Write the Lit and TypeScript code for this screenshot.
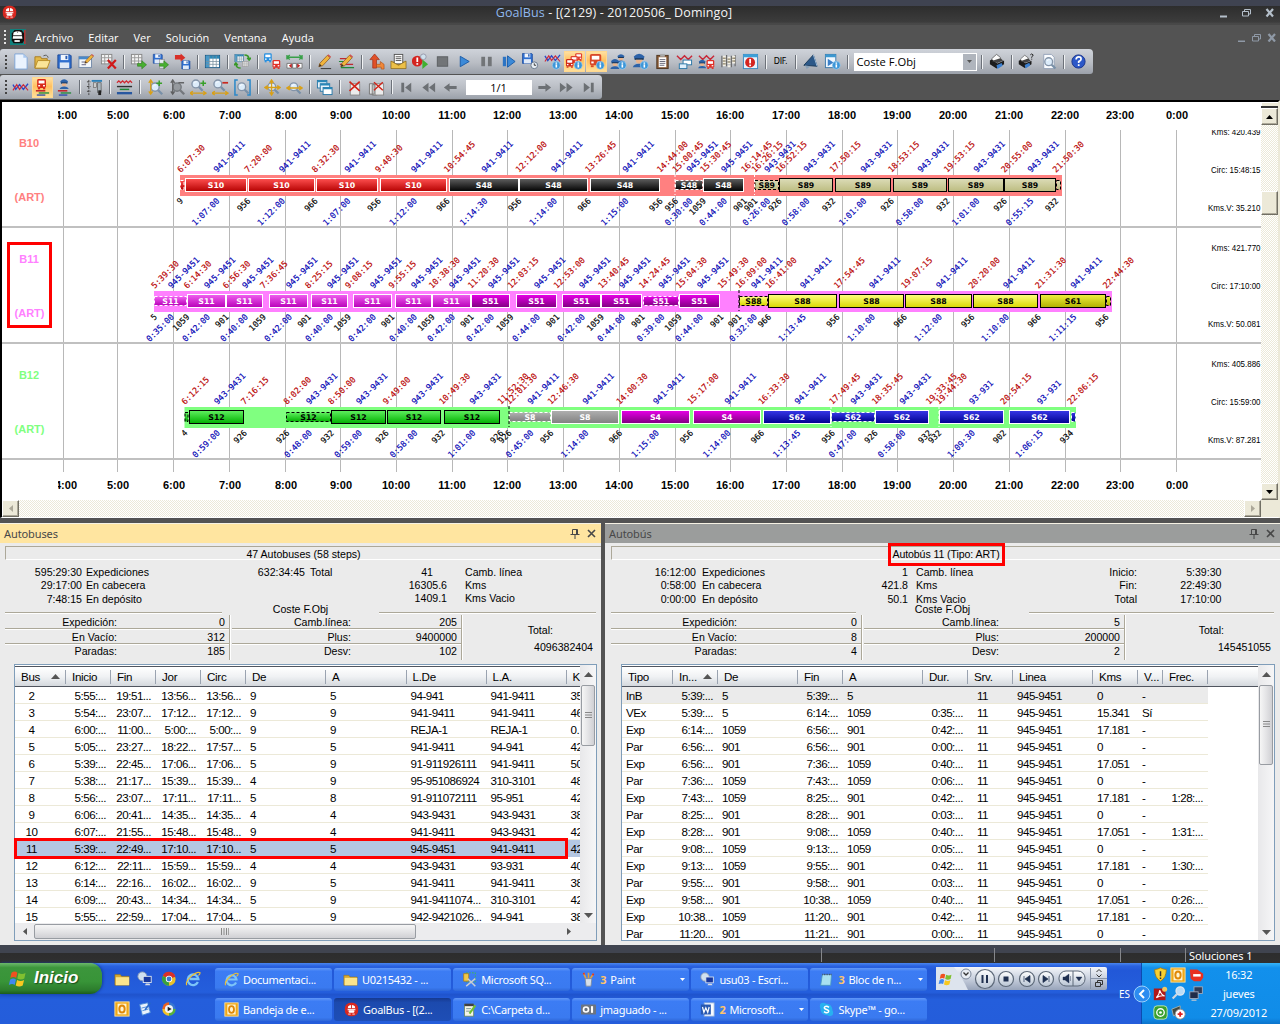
import { LitElement, html, svg, css, nothing } from "lit";
import { customElement, property } from "lit/decorators.js";
import { classMap } from "lit/directives/class-map.js";
import { styleMap } from "lit/directives/style-map.js";

/* ---------- icon building blocks (18 x 18 grid) ---------- */
const at = (x: number, y: number, s: number, g: unknown) => svg`<g transform="translate(${x} ${y}) scale(${s})">${g}</g>`;
const busShape = (c: string) => svg`<rect x="3" y="2" width="12" height="12" rx="2" fill=${c}/><rect x="5" y="4" width="8" height="4" fill="#fff"/><rect x="4.5" y="10" width="2.5" height="2" fill="#fff"/><rect x="11" y="10" width="2.5" height="2" fill="#fff"/><rect x="4" y="14" width="3" height="2" fill=${c}/><rect x="11" y="14" width="3" height="2" fill=${c}/>`;
const floppy = svg`<path d="M2 2h13l1 1v13H2z" fill="#2f6fd0" stroke="#1a4796"/><rect x="5" y="2" width="8" height="5.5" fill="#f2f6fc"/><rect x="10" y="3" width="2" height="3.5" fill="#2a5cb0"/><rect x="4" y="10" width="10" height="6" fill="#dfe9f7"/>`;
const pencil = svg`<path d="M3 14.5L4 11L12 2.5L15 5L7 13.5z" fill="#f0b43c" stroke="#8a5a28" stroke-width=".8"/><path d="M3 14.5L4 11.5L6 13.5z" fill="#403020"/><path d="M12 2.5L15 5L16 4L13 1.4z" fill="#d05050"/>`;
const info = svg`<circle cx="13" cy="13" r="4.2" fill="#3c96d8" stroke="#a8d4f4" stroke-width=".6"/><rect x="12.2" y="12" width="1.7" height="3.4" fill="#fff"/><rect x="12.2" y="10" width="1.7" height="1.4" fill="#fff"/>`;
const cop = svg`<path d="M3 5Q9-1 15 5L14 8H4z" fill="#2c62a8"/><rect x="4" y="7" width="10" height="1.6" fill="#16304e"/><path d="M5.5 8.6h7v2.5q-3.5 4-7 0z" fill="#eab48c"/><path d="M2 17q1-4 7-4t7 4z" fill="#2c62a8"/>`;
const lens = svg`<circle cx="8" cy="8" r="4.6" fill="#dcecfa" stroke="#8494a8" stroke-width="1.6"/><path d="M11.5 11.5L16 16" stroke="#7890a8" stroke-width="2.6"/><path d="M6 7Q7 5.4 9 5.5" stroke="#fff" fill="none"/>`;
const sheet = svg`<path d="M4 1.500h8l3 3v12H4z" fill="#fafcff" stroke="#8898b0" stroke-width=".8"/>`;
const grid = svg`<rect x="1.500" y="2.500" width="15" height="13" fill="#fff" stroke="#1c5c88"/><rect x="2" y="3" width="14" height="3" fill="#2888b8"/><rect x="2" y="3" width="3.500" height="12" fill="#4898c8"/><path d="M2 9h14M2 12h14M6 3v12M9.500 3v12M13 3v12" stroke="#7890a0" stroke-width=".8"/>`;
const grayGrid = svg`<rect x="1.500" y="1.500" width="11" height="10" fill="#f4f4f4" stroke="#888"/><path d="M1 5h12M1 8.500h12M5 1v11M9 1v11" stroke="#999"/>`;
const greenArrow = svg`<path d="M8 11h4.500V8.200L17.500 12.500L12.500 16.800V14H8z" fill="#48b030" stroke="#2a7818" stroke-width=".6"/>`;
const waves = svg`<path d="M1 6L4 11L8 6L12 11L17 5" fill="none" stroke="#2848c8" stroke-width="1.400"/><path d="M1 12L5 6L8 11L12 6L17 12" fill="none" stroke="#d02838" stroke-width="1.200"/>`;
const redZig = svg`<path d="M1 3L5 7L9 3L13 7L17 3" fill="none" stroke="#c82838" stroke-width="1.500"/>`;
const bangCircle = (r: number) => svg`<circle cx="8" cy="9" r=${r} fill="#d42420"/><rect x="7" y="5" width="2" height="5" fill="#fff"/><rect x="7" y="11.300" width="2" height="1.800" fill="#fff"/>`;
const printer = svg`<path d="M4 6L9 1.500L13 4.500L14 8L5 9z" fill="#fafafa" stroke="#444" stroke-width=".7"/><path d="M2 8L4 7L10 11L17 8V12L9 16.500L2 12z" fill="#1c1c1c"/><path d="M4 8.500L13 5.500L16 8L10 10.500z" fill="#444"/><path d="M9 13L14.500 10.500L15.500 13.500L10 17z" fill="#3c80d0"/>`;
const redX = svg`<path d="M3 3L15 14M15 3L3 14" stroke="#d02418" stroke-width="1.900"/>`;
const bars = svg`<path d="M2 12.500h10" stroke="#c02028" stroke-width="1.600"/><path d="M5 14.800h11" stroke="#208838" stroke-width="1.400"/><path d="M3 17h9" stroke="#2848b0" stroke-width="1.400"/>`;
const yArrowH = svg`<path d="M0 15h17M3 13L0 15L3 17M14 13L17 15L14 17" stroke="#d8a018" stroke-width="1.400" fill="none"/>`;

const ICONS: Record<string, unknown> = {
  new: svg`<path d="M3 1h9l4 4v12H3z" fill="#eaf3fe" stroke="#7ea6d8"/><path d="M12 1v4h4z" fill="#a8c8f0"/>`,
  open: svg`<path d="M1 4h6l1 2h6v10H1z" fill="#e2b848" stroke="#a87c20"/><path d="M1 16L4 8h13l-3 8z" fill="#fae498" stroke="#b88c28"/><path d="M10 3q4-2 5 2" stroke="#555" fill="none"/>`,
  save: floppy,
  edit: svg`${at(0, 1, 0.95, svg`<rect x="1" y="3" width="14" height="12" fill="#f4f8fc" stroke="#7088a8"/><rect x="1" y="3" width="14" height="3" fill="#4888c8"/><path d="M4 9h6M4 12h5" stroke="#557"/>`)}${at(5, 0, 0.75, pencil)}`,
  del: svg`${grayGrid}${at(7, 6, 0.65, svg`<path d="M2 2L15 16M15 2L2 16" stroke="#d01818" stroke-width="3.600"/>`)}`,
  gridOut: svg`${grayGrid}${greenArrow}`,
  saveOut: svg`${at(0, 0, 0.68, floppy)}<rect x="8" y="7" width="5" height="9" fill="#e8eef4" stroke="#888" stroke-width=".6"/>${greenArrow}`,
  saveIn: svg`${at(7, 7, 0.62, floppy)}<path d="M1 2h6v-1.500L12 5L7 9V7H1z" fill="#d83028"/>`,
  table: grid,
  swap: svg`${at(0, 0, 0.6, grid)}${at(8, 8, 0.55, grayGrid)}<path d="M11 2q5 0 5 5M14 5l2 2.500L18 5M7 16q-5 0-5-5M0 13l2-2.500L4 13" fill="none" stroke="#389828" stroke-width="1.600"/>`,
  buses: svg`${at(-2, -1, 0.68, busShape("#2890e0"))}${at(7, 6, 0.68, busShape("#e03028"))}`,
  fit: svg`<path d="M1 2v5M17 2v5M1 4.500h16M4 2L1 4.500L4 7M14 2L17 4.500L14 7" stroke="#38a048" fill="none" stroke-width="1.400"/><path d="M1 11v5h5v-5zM7 11v5h4v-5zM12 11v5h5v-5z" fill="#fff" stroke="#777"/><path d="M6 11L3 13.500L6 16M12 11l3 2.500L12 16" fill="#c82020"/>`,
  pencil: svg`${pencil}<path d="M5 16.500h11" stroke="#333"/>`,
  pencilLines: svg`<path d="M2 6h10M2 12h14" stroke="#c02830" stroke-width="1.300"/><path d="M1 9h8M3 15.500h14" stroke="#208838" stroke-width="1.300"/>${pencil}`,
  up: svg`<path d="M7 1L12 7H9v9H5V7H2z" fill="#e05028" stroke="#a02810" stroke-width=".7"/><path d="M9 12h4V9l4 3v5h-3v-2H9z" fill="#f08838" stroke="#a84810" stroke-width=".6"/>`,
  envelope: svg`<path d="M1 9h16v7.500H1z" fill="#c89828"/><rect x="4.500" y="1.500" width="9" height="10" fill="#fff" stroke="#555"/><path d="M6 4h6M6 6h6M6 8h6" stroke="#555"/><path d="M1 8.500L9 13L17 8.500V16.500H1z" fill="#ecc048" stroke="#80601c" stroke-width=".7"/>`,
  bangPlay: svg`${at(-2, 0, 0.95, bangCircle(6))}<circle cx="12" cy="4" r="3" fill="#cfe2ee" stroke="#99a"/><path d="M11 7L17 12L11 17z" fill="#40b030"/>`,
  stop: svg`<rect x="3.500" y="4" width="11" height="10" fill="#727578" stroke="#5c5f62"/>`,
  play: svg`<path d="M4.500 3.500L14 9L4.500 14.500z" fill="#3c8ad8" stroke="#1c5ca8"/>`,
  pause: svg`<rect x="3.500" y="4" width="4" height="10" fill="#727578"/><rect x="10.500" y="4" width="4" height="10" fill="#727578"/>`,
  step: svg`<rect x="3" y="4" width="3.500" height="10" fill="#2c74c4"/><path d="M8 3L16 9L8 15z" fill="#3c8ad8" stroke="#1c5ca8"/>`,
  saveClock: svg`${at(-1, -1, 0.75, floppy)}<circle cx="13" cy="13" r="3.600" fill="#e8eef4" stroke="#68788c"/><path d="M13 11v2h2" stroke="#333" fill="none"/>`,
  wavesInfo: svg`${at(0, -3, 1, waves)}${info}`,
  busesInfo: svg`${at(8, -1, 0.6, busShape("#e04030"))}${at(3, 2, 0.62, busShape("#e04030"))}${at(-2, 5, 0.66, busShape("#d02818"))}${info}`,
  busInfo: svg`${at(-1, -1, 1, busShape("#d84828"))}${info}`,
  copsInfo: svg`${at(6, 0, 0.62, cop)}${at(-1, 5, 0.7, cop)}${info}`,
  copInfo: svg`${at(-1, -1, 0.95, cop)}${info}`,
  clipboard: svg`<rect x="3" y="2.500" width="12" height="14" fill="#8a5c38" stroke="#4c3420"/><rect x="5" y="4.500" width="8" height="10.500" fill="#fff"/><rect x="6.500" y="1" width="5" height="3" fill="#aaa"/><path d="M6 7h6M6 9h6M6 11h6M6 13h5" stroke="#556" stroke-width=".9"/>`,
  zigWin: svg`${redZig}<rect x="7.500" y="7.500" width="9" height="5" fill="#fff" stroke="#2c78a8"/><rect x="3.500" y="11.500" width="8" height="5" fill="#dff0fc" stroke="#2c78a8"/>`,
  zigBus: svg`${redZig}${at(7, 6, 0.68, busShape("#e03028"))}${at(-1, 6, 0.6, cop)}`,
  columns: svg`<path d="M2 3v12M7 2v12M12 3v12M16 2v12" stroke="#666" stroke-width="1.200"/><path d="M3 4h3M3 7h3M3 10h3M3 13h3M8 5h3M8 8h3M8 11h3M8 14h3M13 4h3M13 7h3M13 10h3" stroke="#f4f0e4" stroke-width="2"/><path d="M3 5.500h3M3 8.500h3M3 11.500h3M8 6.500h3M8 9.500h3M13 5.500h3M13 8.500h3" stroke="#887850"/>`,
  bangWin: svg`<rect x="1.500" y="1.500" width="15" height="15" fill="#e8f2fc" stroke="#3c88c0"/><rect x="1.500" y="1.500" width="15" height="3" fill="#3ca0d8"/>${at(1, 1.5, 0.95, bangCircle(5.5))}`,
  horn: svg`<path d="M2 13L12 2L16 14z" fill="#2c5888" stroke="#1a3858"/><path d="M3 13l6 1-4 3z" fill="#88a0b8"/><path d="M12 2l4 12" stroke="#a0c0e0"/>`,
  winPlay: svg`<rect x="1.500" y="1.500" width="11" height="14" fill="#f0f8ff" stroke="#3c78a8"/><rect x="1.500" y="1.500" width="11" height="3" fill="#3c98d0"/><path d="M4 6L10 10L4 14z" fill="#3c80c8"/>${info}`,
  print: printer,
  printQ: svg`${at(-1, 1, 0.9, printer)}<path d="M13 2q1.500-2 3 0q0 1.500-1.500 2v1M14.500 6v1" stroke="#222" fill="none"/>`,
  preview: svg`${sheet}${at(2, 2, 0.9, lens)}`,
  help: svg`<circle cx="9" cy="9" r="7" fill="#2c58c8" stroke="#1a348c"/><path d="M6.500 7q0-3 2.700-3t2.500 2.500q0 1.300-2.500 2.600v1.400M9.200 12v1.800" stroke="#fff" stroke-width="1.800" fill="none"/>`,
  waves,
  busBars: svg`${at(1, -1.5, 0.78, busShape("#d82818"))}${bars}`,
  copBars: svg`${at(2.5, -1, 0.68, cop)}${bars}`,
  chart: svg`<path d="M3 1v16M1 3h4M1 8h4M1 13h4" stroke="#444" stroke-dasharray="2.500 1"/><path d="M6 2h11" stroke="#2c80b8" stroke-width="2"/><rect x="12" y="4" width="4" height="10" fill="#a8b4bc" stroke="#444" stroke-width=".6"/><rect x="13" y="12" width="3" height="5" fill="#222"/><rect x="8" y="4" width="3" height="5" fill="#ccc" stroke="#555" stroke-width=".6"/>`,
  wavesLines: svg`<path d="M1 4L3 2L5 4L7 2L9 4L11 2L13 4L15 2L17 4" stroke="#d02830" stroke-width="1.300" fill="none"/><path d="M1 8h16" stroke="#303030" stroke-width="1.500"/><path d="M4 11h10" stroke="#208838" stroke-width="1.600"/><path d="M1 15h16" stroke="#2858a0" stroke-width="2.500"/>`,
  zoomVIn: svg`${at(2, 1, 0.95, lens)}<path d="M5 1v15M3 4l2-3l2 3M3 13l2 3l2-3" stroke="#d8a018" stroke-width="1.400" fill="none"/><path d="M11 4.500h6M14 1.500v6" stroke="#38a028" stroke-width="1.600"/>`,
  zoomVOut: svg`<g opacity=".75">${at(2, 1, 0.95, svg`<circle cx="8" cy="8" r="4.600" fill="#8a8e92" stroke="#606468" stroke-width="1.600"/><path d="M11.500 11.500L16 16" stroke="#606468" stroke-width="2.600"/>`)}<path d="M5 1v15M3 4l2-3l2 3M3 13l2 3l2-3M11 4h6" stroke="#444" stroke-width="1.400" fill="none"/></g>`,
  zoomHIn: svg`${at(-1, -2, 0.9, lens)}${yArrowH}<path d="M11 4.500h6M14 1.500v6" stroke="#38a028" stroke-width="1.600"/>`,
  zoomHOut: svg`${at(-1, -2, 0.9, lens)}${yArrowH}<path d="M11 4h6" stroke="#c82820" stroke-width="1.800"/>`,
  zoomFit: svg`${at(1, 1, 0.9, lens)}<path d="M4 1H1V17H4M14 1H17V17H14" stroke="#2c88c8" fill="none" stroke-width="1.600"/>`,
  zoomCross: svg`${at(1, 1, 0.9, lens)}<path d="M8 1v16M1 9h16M6 4l2-3l2 3M6 14l2 3l2-3M14 7l3 2l-3 2M4 7L1 9l3 2" stroke="#d8a018" stroke-width="1.400" fill="none"/>`,
  zoomH: svg`${at(1, 1, 0.9, lens)}<path d="M1 9.500h16M14 7.500l3 2l-3 2M4 7.500L1 9.500l3 2" stroke="#d8a018" stroke-width="1.500" fill="none"/>`,
  cascade: svg`<rect x="1.500" y="1.500" width="10" height="8" fill="#e8f4fc" stroke="#2878a8"/><rect x="4.500" y="5" width="10" height="8" fill="#e8f4fc" stroke="#2878a8"/><rect x="7.500" y="9" width="9.500" height="7.500" fill="#fff" stroke="#2878a8"/><path d="M1.500 2.500h10M4.500 6h10M7.500 10h9.500" stroke="#2888b8" stroke-width="1.800"/>`,
  closeOne: svg`<rect x="4.500" y="5" width="10" height="12" fill="#ececec" stroke="#888"/>${at(1, 0, 0.9, redX)}`,
  closeAll: svg`<path d="M1.500 5h5v11h-5zM4.500 6h5v11h-5z" fill="#e4e4e4" stroke="#777"/><rect x="7.500" y="5" width="9" height="12" fill="#ececec" stroke="#888"/>${at(4, 1, 0.78, redX)}`,
  first: svg`<path d="M3.500 4h3v10h-3zM14 4v10L7.500 9z" fill="#6c7074"/>`,
  rew: svg`<path d="M9 4v10L2.500 9zM16 4v10L9.500 9z" fill="#6c7074"/>`,
  left: svg`<path d="M2 9L8 4.500V7.500h7.500v3H8v3z" fill="#6c7074"/>`,
  right: svg`<path d="M16 9L10 4.500V7.500H2.500v3H10v3z" fill="#6c7074"/>`,
  ffw: svg`<path d="M9 4v10l6.500-5zM2 4v10l6.500-5z" fill="#6c7074"/>`,
  last: svg`<path d="M11.500 4h3v10h-3zM4 4v10l6.500-5z" fill="#6c7074"/>`,
  appBus: svg`<rect x="1" y="1" width="16" height="16" rx="6.500" fill="#d82820"/><path d="M5 5q4-3 8 0l.8 5H4.200z" fill="#fff"/><path d="M4 8h10M9 3.500v4.500" stroke="#d82820" stroke-width="1.100"/><rect x="5.500" y="9.800" width="7" height="3" rx="1" fill="#fff"/><path d="M5 14.500h3M10 14.500h3" stroke="#fff"/>`,
  docBus: svg`<rect width="18" height="18" fill="#10807c"/><path d="M5 1h8l3 4v8l-2 3H4l-2-3V5z" fill="#101010"/><path d="M4 4q5-3 9 0l1 7H3z" fill="#fff"/><path d="M3 7.500h11M8.500 3v1" stroke="#222"/><rect x="5" y="12.500" width="6" height="2" fill="#fff"/><rect x="16" y="1" width="1.500" height="16" fill="#e02020"/>`,
  folder: svg`<path d="M1 4h6l1.500 2H17v10H1z" fill="#d8a830" stroke="#8c6c18" stroke-width=".6"/><path d="M2 7h15v9H2z" fill="#fbe48c"/>`,
  remote: svg`<circle cx="6" cy="6" r="5" fill="#d0e0f0" stroke="#8898b0"/><rect x="7" y="6" width="9" height="7" fill="#1838a0" stroke="#e0e8f0"/><path d="M9 16h6l-1-2h-4z" fill="#d8dce4"/>`,
  chrome: svg`<circle cx="9" cy="9" r="7.500" fill="#e8c028"/><path d="M9 9L2 5.500A7.500 7.500 0 0 1 16.200 6.500z" fill="#d83028"/><path d="M9 9L2 5.500A7.500 7.500 0 0 0 9 16.500z" fill="#38a040"/><circle cx="9" cy="9" r="3.600" fill="#fff"/><circle cx="9" cy="9" r="2.700" fill="#3878d0"/>`,
  ie: svg`<path d="M14.500 12.500A6 6 0 1 1 15 9H5" fill="none" stroke="#7cc4f8" stroke-width="2.600"/><path d="M2 16Q0 12 7 6T17 2Q17 4 15 5" fill="none" stroke="#f0c030" stroke-width="1.300"/>`,
  outlook: svg`<rect x="1" y="1" width="16" height="16" fill="#f0a818" stroke="#fbe0a0"/><rect x="4" y="3" width="10" height="12" fill="#fff4d0"/><ellipse cx="9" cy="9" rx="3" ry="4" fill="none" stroke="#e08808" stroke-width="2.200"/>`,
  desktop: svg`<path d="M3 4l9-2 3 11-9 3z" fill="#e8f2fc" stroke="#4888d8"/><path d="M5 8l8-2M6 11l7-2" stroke="#4888d8"/><path d="M9 10l6-8" stroke="#2868c8" stroke-width="1.800"/>`,
  media: svg`<circle cx="9" cy="9" r="7.500" fill="#3878d0"/><path d="M9 9V1.500A7.500 7.500 0 0 0 1.500 9z" fill="#e86020"/><path d="M9 9h7.500A7.500 7.500 0 0 1 9 16.500z" fill="#58b038"/><path d="M9 9H1.500A7.500 7.500 0 0 0 9 16.500z" fill="#f0c028"/><circle cx="9" cy="9" r="4.600" fill="#f0f4f8"/><path d="M7.500 6.500L12 9L7.500 11.500z" fill="#202020"/>`,
  sql: svg`<rect x="5" y="1" width="11" height="11" fill="none" stroke="#40c040" stroke-dasharray="2 1.500"/><path d="M2 2h6v9H2z" fill="#f0c848" stroke="#a88020"/><path d="M5 17L16 8M7 8l9 9" stroke="#c8ccd4" stroke-width="1.800"/>`,
  paint: svg`<path d="M6 8L3 1M9 8V1M11 8L15 2" stroke="#e0a040" stroke-width="2"/><path d="M3 1l1 2M15 2l-1 2" stroke="#e03028" stroke-width="2"/><path d="M5 8h8l-1 9H6z" fill="#d8e0e8" stroke="#7888a0"/>`,
  notepad: svg`<path d="M4 3h11l-1 13H2z" fill="#a8e0f0" stroke="#4898c0"/><path d="M4 3h11" stroke="#446" stroke-dasharray="1 1" stroke-width="2"/>`,
  notes: svg`<rect x="3" y="3" width="11" height="14" fill="#f4f4e8" stroke="#686"/><path d="M5 8h6M5 11h6" stroke="#688"/><rect x="3" y="2" width="11" height="3" fill="#404040"/><path d="M9 14L16 4" stroke="#70c030" stroke-width="2.400"/>`,
  messenger: svg`<rect x="0" y="3" width="18" height="12" rx="1" fill="#6c7480"/><circle cx="6" cy="9" r="3" fill="none" stroke="#fff" stroke-width="2"/><rect x="12" y="5" width="2.500" height="8" fill="#fff"/>`,
  word: svg`<rect x="5" y="1" width="12" height="16" fill="#f8fbff" stroke="#8aa8d8"/><rect x="1" y="3" width="12" height="12" fill="#2858b0"/><path d="M3 6l1.700 6.500L7 7l2.300 5.500L11 6" stroke="#fff" stroke-width="1.500" fill="none"/>`,
  skype: svg`<circle cx="9" cy="9" r="7" fill="#28b0f0"/><circle cx="5" cy="5" r="4" fill="#28b0f0"/><circle cx="13" cy="13" r="4" fill="#28b0f0"/><path d="M12 6.500Q9 4 7 5.800T9 9T11 12.200T6 11.500" stroke="#fff" stroke-width="1.700" fill="none"/>`,
  shield: svg`<path d="M9 1q4 2 7 2q0 10-7 14q-7-4-7-14q3 0 7-2z" fill="#f8d030" stroke="#a07810"/><path d="M9 5v6M9 12.500v2" stroke="#303030" stroke-width="1.800"/>`,
  red: svg`<path d="M1 3h9l7 5v5l-3 4H6l-4-3z" fill="#e83020"/><rect x="5" y="8.500" width="9" height="3" fill="#fff"/>`,
  pdf: svg`<rect x="1" y="3" width="14" height="14" fill="#b01818"/><path d="M4 14q4-4 4-9q2 6 6 7q-5-1-10 2z" fill="none" stroke="#fff" stroke-width="1.300"/><circle cx="14" cy="4" r="3" fill="#f0c860"/>`,
  find: svg`<circle cx="11" cy="6" r="5" fill="#b8dcf8" stroke="#e0e8f0" stroke-width="1.500"/><path d="M7 10L2 15" stroke="#d0d8e0" stroke-width="2.600"/>`,
  net: svg`<rect x="6" y="1" width="10" height="8" fill="#303c58" stroke="#a8b0c0"/><rect x="1" y="7" width="10" height="8" fill="#202c48" stroke="#a8b0c0"/><path d="M3 17h6" stroke="#c0c8d0" stroke-width="1.500"/>`,
  green: svg`<rect x="1" y="1" width="16" height="16" rx="4" fill="#38a030" stroke="#d0f0c0"/><circle cx="9" cy="9" r="4.500" fill="none" stroke="#fff" stroke-width="1.600"/><circle cx="9" cy="9" r="1.600" fill="#fff"/>`,
  medic: svg`<path d="M1 5l10-4v8L3 13z" fill="#404840" stroke="#b0b8b0"/><circle cx="11" cy="11" r="6" fill="#fff" stroke="#888"/><path d="M11 8v6M8 11h6" stroke="#e02020" stroke-width="2.200"/>`,
  flag: svg`<path d="M3 4q3-2 5 0L7 8.500q-2-1.500-5 0z" fill="#f05020"/><path d="M9 4.300q3 1.500 6 0L14 9q-3 1.500-6 0z" fill="#80c030"/><path d="M1.800 10q3-2 5 0L5.700 14.500q-2-1.500-5 0z" fill="#4088f0"/><path d="M7.800 10.300q3 1.500 6 0L12.600 15q-3 1.500-6 0z" fill="#f8c820"/>`,
};

const icon = (name: string, size = 18) => html`<svg class="ico" width=${size} height=${size} viewBox="0 0 18 18">${ICONS[name]}</svg>`;

/* ---------- schedule data ---------- */
type Seg = [number, number, string, string, boolean?, string?, string?];
interface BusRow { id: string; color: string; y: number; from: number; to: number; segs: Seg[]; events: [string, string][]; marks: [number, string][]; info: string[]; }

const B10: BusRow = {
  id: "B10", color: "#ff8080", y: 0, from: 180, to: 1062,
  segs: [
    [180, 184.5, "", "red", true],
    [185, 247, "S10", "red", false, "941-9411", "1:07:00"], [248, 315, "S10", "red", false, "941-9411", "1:12:00"],
    [316, 378, "S10", "red", false, "941-9411", "1:07:00"], [380, 447, "S10", "red", false, "941-9411", "1:12:00"],
    [449, 519, "S48", "black", false, "941-9411", "1:14:30"], [519, 588, "S48", "black", false, "941-9411", "1:14:00"],
    [590, 660, "S48", "black", false, "941-9411", "1:15:00"], [675, 703, "S48", "black", true, "945-9451", "0:30:00"],
    [703, 744, "S48", "black", false, "945-9451", "0:44:00"], [754.5, 779, "S89", "tan", true, "943-9431", "0:26:00"],
    [779, 833, "S89", "tan", false, "943-9431", "0:58:00"], [835, 891, "S89", "tan", false, "943-9431", "1:01:00"],
    [893, 947, "S89", "tan", false, "943-9431", "0:58:00"], [948, 1004, "S89", "tan", false, "943-9431", "1:01:00"],
    [1004, 1056, "S89", "tan", false, "943-9431", "0:55:15"], [1056, 1061, "", "tan", true],
  ],
  events: [["6:07:30", "9"], ["7:20:00", "956"], ["8:32:30", "966"], ["9:40:30", "956"], ["10:54:45", "966"], ["12:12:00", "956"], ["13:26:45", "966"], ["14:44:00", "956"], ["15:00:45", "956"], ["15:30:45", "1059"], ["16:14:45", "901"], ["16:26:15", "901"], ["16:52:15", "926"], ["17:50:15", "932"], ["18:53:15", "926"], ["19:53:15", "932"], ["20:55:00", "926"], ["21:50:30", "932"]],
  marks: [[675, "#fff"], [754.5, "#fff"]],
  info: ["Kms: 420.439", "Circ: 15:48:15", "Kms.V: 35.210"],
};
const B11: BusRow = {
  id: "B11", color: "#ff80ff", y: 116, from: 154, to: 1112,
  segs: [
    [154, 187, "S11", "pink", true, "945-9451", "0:35:00"], [187, 226, "S11", "pink", false, "945-9451", "0:42:00"],
    [226, 263, "S11", "pink", false, "945-9451", "0:40:00"], [269, 308, "S11", "pink", false, "945-9451", "0:42:00"],
    [311, 348, "S11", "pink", false, "945-9451", "0:40:00"], [353, 392, "S11", "pink", false, "945-9451", "0:42:00"],
    [395, 432, "S11", "pink", false, "945-9451", "0:40:00"], [432, 471, "S11", "pink", false, "945-9451", "0:42:00"],
    [471, 510, "S51", "magenta", false, "945-9451", "0:42:00"], [516, 557, "S51", "magenta", false, "945-9451", "0:44:00"],
    [562, 601, "S51", "magenta", false, "945-9451", "0:42:00"], [601, 642, "S51", "magenta", false, "945-9451", "0:44:00"],
    [643, 679, "S51", "magenta", true, "945-9451", "0:39:00"], [679, 720, "S51", "magenta", false, "945-9451", "0:44:00"],
    [739, 768, "S88", "yellow", true, "941-9411", "0:32:00"], [768, 837, "S88", "yellow", false, "941-9411", "1:13:45"],
    [839, 904, "S88", "yellow", false, "941-9411", "1:10:00"], [905, 972, "S88", "yellow", false, "941-9411", "1:12:00"],
    [973, 1038, "S88", "yellow", false, "941-9411", "1:10:00"], [1040, 1106, "S61", "olive", false, "941-9411", "1:11:15"],
    [1106, 1111, "", "olive", true],
  ],
  events: [["5:39:30", "5"], ["6:14:30", "1059"], ["6:56:30", "901"], ["7:36:45", "1059"], ["8:25:15", "901"], ["9:08:15", "1059"], ["9:55:15", "901"], ["10:38:30", "1059"], ["11:20:30", "901"], ["12:03:15", "1059"], ["12:53:00", "901"], ["13:40:45", "1059"], ["14:24:45", "901"], ["15:04:30", "1059"], ["15:49:30", "901"], ["16:09:00", "901"], ["16:41:00", "966"], ["17:54:45", "956"], ["19:07:15", "966"], ["20:20:00", "956"], ["21:31:30", "966"], ["22:44:30", "956"]],
  marks: [[739, "#000"]],
  info: ["Kms: 421.770", "Circ: 17:10:00", "Kms.V: 50.081"],
};
const B12: BusRow = {
  id: "B12", color: "#80ff80", y: 232, from: 184.5, to: 1076,
  segs: [
    [184.5, 188.5, "", "green", true], [189, 244, "S12", "green", false, "943-9431", "0:59:00"],
    [286, 331, "S12", "green", true, "943-9431", "0:48:00"], [331, 386, "S12", "green", false, "943-9431", "0:59:00"],
    [387, 441, "S12", "green", false, "943-9431", "0:58:00"], [444, 500, "S12", "green", false, "943-9431", "1:01:00"],
    [509, 551, "S8", "gray", true, "941-9411", "0:45:00"], [551, 619, "S8", "gray", false, "941-9411", "1:14:00"],
    [621, 690, "S4", "magenta", false, "941-9411", "1:15:00"], [693, 761, "S4", "magenta", false, "941-9411", "1:14:00"],
    [763, 831, "S62", "blue", false, "941-9411", "1:13:45"], [831, 875, "S62", "blue", true, "943-9431", "0:47:00"],
    [875, 929, "S62", "blue", false, "943-9431", "0:58:00"], [939, 1004, "S62", "blue", false, "93-931", "1:09:30"],
    [1009, 1070, "S62", "blue", false, "93-931", "1:06:15"], [1071, 1076, "", "blue", true],
  ],
  events: [["6:12:15", "4"], ["7:16:15", "926"], ["8:02:00", "926"], ["8:50:00", "932"], ["9:49:00", "926"], ["10:49:30", "932"], ["11:52:30", "926"], ["12:01:30", "926"], ["12:46:30", "956"], ["14:00:30", "966"], ["15:17:00", "956"], ["16:33:30", "966"], ["17:49:45", "956"], ["18:35:45", "926"], ["19:33:45", "932"], ["19:44:30", "932"], ["20:54:15", "902"], ["22:06:15", "934"]],
  marks: [[509, "#000"], [831, "#fff"], [939, "#fff"]],
  info: ["Kms: 405.886", "Circ: 15:59:00", "Kms.V: 87.281"],
};
/* gradient stops and outline/caption colour of each service */
const TONES: Record<string, [string, string, string]> = {
  red: ["#ff5050", "#b40000", "#fff"], black: ["#606060", "#000000", "#fff"], tan: ["#dcdcb8", "#bcbc80", "#000"],
  pink: ["#f060f0", "#b800b8", "#fff"], magenta: ["#e800e8", "#800080", "#fff"], yellow: ["#ffff80", "#d8d800", "#000"],
  olive: ["#f0f040", "#b0b000", "#000"], green: ["#60f060", "#00b000", "#000"], gray: ["#b0b0b0", "#808080", "#fff"], blue: ["#3838e8", "#000090", "#fff"],
};
const HOURS: [number, string][] = [[118, "5:00"], [174, "6:00"], [230, "7:00"], [286, "8:00"], [341, "9:00"], [397, "10:00"], [453, "11:00"], [508, "12:00"], [564, "13:00"], [620, "14:00"], [676, "15:00"], [731, "16:00"], [787, "17:00"], [843, "18:00"], [898, "19:00"], [954, "20:00"], [1010, "21:00"], [1066, "22:00"], [1121, "23:00"], [1177, "0:00"]];
const timeX = (t: string) => {
  const [h, m, s] = t.split(":").map(Number);
  return 118 + 55.7 * (h + m / 60 + s / 3600 - 5);
};
const tiltW = (t: string) => t.length * 5.1 - (t.includes(":") ? 0.6 : 0.4);

@customElement("bus-gantt")
class BusGantt extends LitElement {
  static styles = css`
    :host { display: grid; grid-template-columns: 1259px 17px; grid-template-rows: 398px 17px; box-sizing: border-box; height: 418px;
      border: solid; border-width: 2px 2px 1px 2px; border-color: #000 #ece9d8 #fff #000; background: #fff; }
    .canvas { display: block; overflow: hidden; }
    text { font-family: "Liberation Sans", sans-serif; }
    .hour { font-size: 11px; font-weight: bold; }
    .name { font-size: 11px; font-weight: bold; }
    .seg { font: bold 7.8px "DejaVu Sans", sans-serif; }
    .tilt { font: 8.3px "DejaVu Sans Mono", monospace; stroke-width: .15px; }
    .time { fill: #b80000; stroke: #b80000; }
    .line { fill: #0000b4; stroke: #0000b4; }
    .node { fill: #000; stroke: #000; }
    .info { font-size: 9.5px; }
    .vbar, .hbar { display: flex; background: repeating-conic-gradient(#fff 0 25%, #ece9d8 0 50%) 0 0 / 2px 2px; }
    .vbar { flex-direction: column; }
    .hbar { justify-content: space-between; }
    .split { height: 4px; background: #ece9d8; border-bottom: 2px solid #333; box-shadow: inset 1px 1px #fff; }
    .btn { box-sizing: border-box; width: 17px; height: 17px; background: #ece9d8; border: 1px solid; border-color: #fff #716f64 #716f64 #fff; box-shadow: inset -1px -1px #aca899; display: grid; place-items: center; flex: none; }
    .thumb { height: 24px; margin: 66px 0 auto; }
    .corner { background: #ece9d8; }
  `;
  private seg(s: Seg, y: number) {
    const [a, b, label, tone, dashed] = s;
    const edge = TONES[tone][2];
    return svg`<rect x=${a + 0.5} y=${(dashed ? 180.5 : 178.5) + y} width=${b - a - 1} height=${dashed ? 9 : 13} fill="url(#${tone})" stroke=${edge} stroke-width="1" stroke-dasharray=${dashed ? "3 2" : "none"}/>
      <text class="seg" x=${(a + b) / 2} y=${187.8 + y} text-anchor="middle" fill=${edge}>${label}</text>`;
  }
  private tilted(x: number, y: number, text: string, cls: string, end: boolean) {
    return svg`<text class="tilt ${cls}" transform="translate(${x} ${y}) rotate(-45)" text-anchor=${end ? "end" : "start"} textLength=${tiltW(text)} lengthAdjust="spacingAndGlyphs">${text}</text>`;
  }
  private bus(r: BusRow) {
    return svg`
      <text class="name" x="29" y=${147 + r.y} text-anchor="middle" fill=${r.color}>${r.id}</text>
      <text class="name" x="29.500" y=${201 + r.y} text-anchor="middle" fill=${r.color}>(ART)</text>
      <rect x=${r.from} y=${175 + r.y} width=${r.to - r.from} height="21" fill=${r.color}/>
      ${r.segs.map((s) => this.seg(s, r.y))}
      ${r.marks.map(([x, c]) => svg`<path d="M${x} ${174 + r.y}v21" stroke=${c} stroke-dasharray="3 2"/>`)}
      ${r.segs.map((s) => (s[5] ? svg`${this.tilted((s[0] + s[1]) / 2 + 1, 173 + r.y, s[5], "line", false)}${this.tilted((s[0] + s[1]) / 2 + 4, 201.5 + r.y, s[6]!, "line", true)}` : nothing))}
      ${r.events.map(([t, n]) => svg`${this.tilted(timeX(t), 173 + r.y, t, "time", false)}${this.tilted(timeX(t) + 3, 201.5 + r.y, n, "node", true)}`)}
      ${r.info.map((t, i) => svg`<text class="info" x=${1260.5 - (i === 0 ? 49 : i === 1 ? 49.5 : 52.5)} y=${135 + 38 * i + r.y} textLength=${i === 0 ? 49 : i === 1 ? 49.5 : 52.5} lengthAdjust="spacingAndGlyphs">${t}</text>`)}
      <rect x="2" y=${226 + r.y} width="1259" height="2" fill="#c0c0c0"/>`;
  }
  private hours(y: number) {
    return svg`<g clip-path="url(#hourClip)"><text class="hour" x="55" y=${y}>4:00</text></g>${HOURS.map(([x, t]) => svg`<text class="hour" x=${x - (t.length > 4 ? 1 : 0)} y=${y} text-anchor="middle">${t}</text>`)}`;
  }
  render() {
    return html`
      <svg class="canvas" width="1259" height="398" viewBox="2 102 1259 398">
        <defs>
          ${Object.entries(TONES).map(([k, [a, b]]) => svg`<linearGradient id=${k} x1="0" y1="0" x2="0" y2="1"><stop offset="0" stop-color=${a}/><stop offset="1" stop-color=${b}/></linearGradient>`)}
          <clipPath id="hourClip"><rect x="58" y="102" width="40" height="398"/></clipPath>
          <clipPath id="rowClip"><rect x="2" y="130" width="1259" height="342"/></clipPath>
        </defs>
        ${this.hours(119)}
        <g clip-path="url(#rowClip)">
          ${[63, ...HOURS.map((h) => h[0] - 1)].map((x) => svg`<rect x=${x} y="130" width="1" height="342" fill="#b8b8b8"/>`)}
          ${[B10, B11, B12].map((r) => this.bus(r))}
        </g>
        <rect x="8.500" y="243.500" width="42" height="83" fill="none" stroke="#f00" stroke-width="3"/>
        ${this.hours(489)}
      </svg>
      <div class="vbar">
        <div class="split"></div>
        <div class="btn"><svg width="7" height="4"><path d="M0 4L3.500 0L7 4z"/></svg></div>
        <div class="btn thumb"></div>
        <div class="btn"><svg width="7" height="4"><path d="M0 0h7L3.500 4z"/></svg></div>
      </div>
      <div class="hbar">
        <div class="btn"><svg width="4" height="7"><path d="M4 0v7L0 3.500z" fill="#aca899"/></svg></div>
        <div class="btn"><svg width="4" height="7"><path d="M0 0v7L4 3.500z" fill="#aca899"/></svg></div>
      </div>
      <div class="corner"></div>`;
  }
}

/* ---------- tables ---------- */
interface Col { w: number; t: string; align?: "r" | "c"; sort?: boolean; }
const L_COLS: Col[] = [{ w: 51, t: "Bus", align: "c", sort: true }, { w: 45, t: "Inicio", align: "r" }, { w: 45, t: "Fin", align: "r" }, { w: 45, t: "Jor", align: "r" }, { w: 45, t: "Circ", align: "r" }, { w: 80, t: "De" }, { w: 80.5, t: "A" }, { w: 80, t: "L.De" }, { w: 80, t: "L.A." }, { w: 80, t: "K" }];
const L_ROWS = `2|5:55:...|19:51...|13:56...|13:56...|9|5|94-941|941-9411|35
3|5:54:...|23:07...|17:12...|17:12...|9|9|941-9411|941-9411|46
4|6:00:...|11:00...|5:00:...|5:00:...|9|9|REJA-1|REJA-1|0.
5|5:05:...|23:27...|18:22...|17:57...|5|5|941-9411|94-941|42
6|5:39:...|22:45...|17:06...|17:06...|5|9|91-911926111|941-9411|50
7|5:38:...|21:17...|15:39...|15:39...|4|9|95-951086924|310-3101|48
8|5:56:...|23:07...|17:11...|17:11...|5|8|91-911072111|95-951|42
9|6:06:...|20:41...|14:35...|14:35...|4|4|943-9431|943-9431|38
10|6:07:...|21:55...|15:48...|15:48...|9|4|941-9411|943-9431|42
11|5:39:...|22:49...|17:10...|17:10...|5|5|945-9451|941-9411|42
12|6:12:...|22:11...|15:59...|15:59...|4|4|943-9431|93-931|40
13|6:14:...|22:16...|16:02...|16:02...|9|5|941-9411|941-9411|38
14|6:09:...|20:43...|14:34...|14:34...|5|9|941-9411074...|310-3101|42
15|5:55:...|22:59...|17:04...|17:04...|5|9|942-9421026...|94-941|38`.split("\n").map((r) => r.split("|"));
const R_COLS: Col[] = [{ w: 51, t: "Tipo" }, { w: 45, t: "In...", align: "r", sort: true }, { w: 80, t: "De" }, { w: 45, t: "Fin", align: "r" }, { w: 80, t: "A" }, { w: 45, t: "Dur.", align: "r" }, { w: 45, t: "Srv." }, { w: 80, t: "Linea" }, { w: 45, t: "Kms" }, { w: 25, t: "V..." }, { w: 45, t: "Frec.", align: "r" }];
const R_ROWS = `InB|5:39:...|5|5:39:...|5||0|-|
VEx|5:39:...|5|6:14:...|1059|0:35:...|15.341|Sí|
Exp|6:14:...|1059|6:56:...|901|0:42:...|17.181|-|
Par|6:56:...|901|6:56:...|901|0:00:...|0|-|
Exp|6:56:...|901|7:36:...|1059|0:40:...|17.051|-|
Par|7:36:...|1059|7:43:...|1059|0:06:...|0|-|
Exp|7:43:...|1059|8:25:...|901|0:42:...|17.181|-|1:28:...
Par|8:25:...|901|8:28:...|901|0:03:...|0|-|
Exp|8:28:...|901|9:08:...|1059|0:40:...|17.051|-|1:31:...
Par|9:08:...|1059|9:13:...|1059|0:05:...|0|-|
Exp|9:13:...|1059|9:55:...|901|0:42:...|17.181|-|1:30:...
Par|9:55:...|901|9:58:...|901|0:03:...|0|-|
Exp|9:58:...|901|10:38...|1059|0:40:...|17.051|-|0:26:...
Exp|10:38...|1059|11:20...|901|0:42:...|17.181|-|0:20:...
Par|11:20...|901|11:21...|901|0:00:...|0|-|`.split("\n").map((r) => {
  const c = r.split("|");
  return [...c.slice(0, 6), "11", "945-9451", ...c.slice(6)];
});

@customElement("data-list")
class DataList extends LitElement {
  @property({ attribute: false }) cols: Col[] = [];
  @property({ attribute: false }) rows: string[][] = [];
  @property({ type: Number }) selected = -1;
  @property({ type: Number }) shaded = -1;
  @property({ type: Number }) thumb = 60;
  @property({ type: Boolean }) hscroll = false;
  static styles = css`
    :host { display: grid; grid-template-columns: minmax(0, 1fr) 16px; grid-template-rows: minmax(0, 1fr) auto; box-sizing: border-box; height: 277px; border: 1px solid #7f9db9; background: #fff; position: relative;
      font: 11.6px/17px "Liberation Sans", sans-serif; letter-spacing: -.5px; color: #000; }
    .view { overflow: hidden; padding-top: 1px; }
    .head, .row { display: grid; width: max-content; }
    .headwrap { height: 21px; box-sizing: border-box; border-top: 1px solid #50555f; border-bottom: 1px solid #50555f; background: linear-gradient(#fff, #f0f2f4 50%, #d4d8dd); }
    .hc { display: flex; align-items: center; height: 19px; padding-left: 6px; box-sizing: border-box; }
    .hc span { flex: 1; white-space: nowrap; letter-spacing: -.3px; }
    .hc svg { margin-right: 5px; }
    .hc::after { content: ""; width: 1px; height: 14px; background: #9aa3b0; }
    .row { height: 17px; box-sizing: border-box; border-bottom: 1px solid #ece9d8; }
    .cell { padding: 0 5px 0 4px; line-height: 17px; white-space: nowrap; overflow: hidden; }
    .cell.r { text-align: right; }
    .cell.c { text-align: center; padding-right: 22px; }
    .cell.in { padding-left: 9px; }
    .shaded { background: #ebebeb; }
    .selected { background: #b4c7e3; border-bottom-color: #b4c7e3; }
    .vs { display: flex; flex-direction: column; align-items: center; background: linear-gradient(90deg, #e8e8ea, #f6f6f7); padding-top: 7px; box-sizing: border-box; }
    .vt { box-sizing: border-box; width: 14px; margin: 8px 0 auto; border: 1px solid #989ca2; border-radius: 2px; background: linear-gradient(90deg, #f6f6f6, #e4e4e6 50%, #d0d0d4); display: grid; place-items: center; }
    .dn { margin-bottom: 5px; }
    .hs { grid-column: 1 / 3; height: 17px; display: flex; align-items: center; background: #ececee; padding: 0 24px 0 7px; }
    .ht { box-sizing: border-box; width: 382px; height: 15px; margin: 0 auto 0 7px; border: 1px solid #989ca2; border-radius: 2px; background: linear-gradient(#f6f6f6, #e4e4e6 50%, #d0d0d4); display: grid; place-items: center; }
    .mark { position: absolute; box-sizing: border-box; border: 3px solid #f00; left: -1px; width: 554px; top: 173px; height: 21px; }
    svg { display: block; }
  `;
  render() {
    const tpl = styleMap({ gridTemplateColumns: this.cols.map((c) => c.w + "px").join(" ") });
    return html`
      <div class="view">
        <div class="headwrap"><div class="head" style=${tpl}>${this.cols.map((c) => html`<div class="hc"><span>${c.t}</span>${c.sort ? html`<svg width="9" height="5"><path d="M0 5L4.500 0L9 5z" fill="#555"/></svg>` : nothing}</div>`)}</div></div>
        ${this.rows.map((r, i) => html`<div class=${classMap({ row: true, selected: i === this.selected, shaded: i === this.shaded })} style=${tpl}>${r.map((v, j) => html`<div class=${classMap({ cell: true, r: this.cols[j].align === "r", c: this.cols[j].align === "c", in: this.cols[j].t === "Srv." })}>${v}</div>`)}</div>`)}
      </div>
      <div class="vs">
        <svg width="9" height="5"><path d="M0 5L4.500 0L9 5z" fill="#555"/></svg>
        <div class="vt" style=${styleMap({ height: this.thumb + "px" })}><svg width="7" height="8"><path d="M0 .5h7M0 3h7M0 5.500h7" stroke="#888"/></svg></div>
        <svg class="dn" width="9" height="5"><path d="M0 0h9L4.500 5z" fill="#555"/></svg>
      </div>
      ${this.hscroll ? html`<div class="hs"><svg width="5" height="7"><path d="M5 0v7L1 3.500z" fill="#555"/></svg><div class="ht"><svg width="8" height="7"><path d="M.5 0v7M3 0v7M5.500 0v7M7.800 0v7" stroke="#888"/></svg></div><svg width="5" height="7"><path d="M0 0v7L4 3.500z" fill="#555"/></svg></div><div class="mark"></div>` : nothing}`;
  }
}

/* ---------- summary panels ---------- */
interface Cost { left: string[]; mid: string[]; total: string; }
const pin = html`<svg width="10" height="10"><path d="M2.500 .5h5v5h-5zM.5 5.500h9M5 6v4M6.500 1v4" fill="none" stroke="currentColor"/></svg>`;
const cross = html`<svg width="9" height="9"><path d="M1 1L8 8M8 1L1 8" stroke="currentColor" stroke-width="1.600"/></svg>`;

@customElement("bus-panel")
class BusPanel extends LitElement {
  @property() heading = "";
  @property() caption = "";
  @property({ type: Boolean, reflect: true }) active = false;
  @property({ attribute: false }) stats: string[][] = [];
  @property({ attribute: false }) cost: Cost = { left: [], mid: [], total: "" };
  static styles = css`
    :host { display: block; background: #ebebeb; height: 422px; overflow: hidden; font: 10.6px/14px "Liberation Sans", sans-serif; color: #000; box-sizing: border-box; border-top: 1px solid #f6f2e4; }
    .title { height: 19px; display: flex; align-items: center; gap: 7px; padding: 0 5px 0 4px; background: #9b9d9c; color: #484848; font: 11px "Noto Sans", sans-serif; box-sizing: border-box; }
    .title span { flex: 1; letter-spacing: -.1px; }
    :host([active]) .title { background: #ffe5a0; }
    .box { height: 14px; line-height: 14px; margin: 3px 0 0 5px; border: 1px solid #aca899; border-bottom-color: #fff; border-right: 0; box-sizing: border-box; text-align: center; }
    :host(:not([active])) .box { margin-left: 6px; letter-spacing: -.1px; }
    .stats { display: grid; grid-template-rows: 13px 13px 14px; margin-top: 6px; grid-template-columns: 82px 118px 105px 95px 47px 1fr; }
    :host(:not([active])) .stats { grid-template-columns: 91px 159px 53px 127px 102px 84.500px; }
    .stats > div { line-height: 13px; white-space: nowrap; }
    .stats > .low { padding-top: 1px; }
    .n { text-align: right; }
    .lb { padding-left: 4px; }
    .lb4 { padding-left: 5px; }
    .lb6 { padding-left: 18px; }
    .one { padding-right: 14px; }
    :host(:not([active])) .lb { padding-left: 6px; }
    :host(:not([active])) .lb4 { padding-left: 8px; }
    .cost { margin: -3px 5px 0 5px; height: 57px; }
    :host(:not([active])) .cost { margin-left: 6px; margin-right: 6px; }
    .ct { display: flex; height: 12px; line-height: 12px; align-items: flex-end; justify-content: space-between; }
    .ct i { width: 217px; height: 1px; background: #aca899; border-bottom: 1px solid #fff; margin-bottom: 1px; }
    .ct span { white-space: nowrap; }
    :host(:not([active])) .ct i { width: 245px; }
    .cb { display: flex; height: 45px; }
    .col { border-right: 1px solid #aca899; box-shadow: 1px 0 #fff; margin-right: 2px; flex: none; }
    .c1 { width: 224px; }
    .c2 { width: 229px; }
    :host(:not([active])) .c1 { width: 250px; }
    :host(:not([active])) .c2 { width: 260px; }
    .cr { display: flex; height: 14px; line-height: 14px; border-bottom: 1px solid #aca899; box-shadow: 0 1px #fff; box-sizing: border-box; padding-right: 4px; margin-bottom: .5px; }
    .cr:last-child { border: 0; box-shadow: none; line-height: 15px; }
    .cr b { font-weight: normal; width: 112px; text-align: right; }
    .c2 .cr b { width: 119px; }
    :host(:not([active])) .cr b { width: 126px; }
    :host(:not([active])) .c2 .cr b { width: 135px; }
    .cr em { font-style: normal; flex: 1; text-align: right; }
    .tot { flex: 1; display: flex; flex-direction: column; text-align: right; padding-top: 8px; gap: 3px; }
    .tot span:first-child { padding-right: 43px; }
    .tot span:last-child { padding-right: 3px; }
    :host(:not([active])) .tot span:first-child { padding-right: 50px; }
    ::slotted(*) { margin: 4px 4px 0 14px; }
    :host(:not([active])) ::slotted(*) { margin: 4px 5px 0 16px; }
  `;
  private col(rows: string[], cls: string) {
    return html`<div class="col ${cls}">${rows.map((r) => { const [a, b] = r.split("|"); return html`<div class="cr"><b>${a}</b><em>${b}</em></div>`; })}</div>`;
  }
  render() {
    const kinds = this.active ? ["n", "lb", "n", "lb4", "n", "lb6"] : ["n", "lb", "n", "lb4", "n", "n"];
    return html`
      <div class="title"><span>${this.heading}</span>${pin}${cross}</div>
      <div class="box">${this.caption}</div>
      <div class="stats">${this.stats.map((r, k) => r.map((t, i) => html`<div class=${kinds[i] + (t === "41" ? " one" : "") + (k === 2 && (i < 2 || !this.active) ? " low" : "")}>${t}</div>`))}</div>
      <div class="cost">
        <div class="ct"><i></i><span>Coste F.Obj</span><i></i></div>
        <div class="cb">${this.col(this.cost.left, "c1")}${this.col(this.cost.mid, "c2")}<div class="tot"><span>Total:</span><span>${this.cost.total}</span></div></div>
      </div>
      <slot></slot>`;
  }
}

/* ---------- toolbars ---------- */
const BAR1: string[] = "new open save edit del | gridOut saveOut saveIn | table | swap | buses fit | pencil pencilLines | up envelope bangPlay stop play pause step saveClock wavesInfo *busesInfo *busInfo copsInfo copInfo clipboard zigWin zigBus columns bangWin | DIF | horn winPlay | COMBO | print | printQ preview | help".split(" ");
const BAR2: string[] = "waves *busBars copBars | chart | wavesLines | zoomVIn zoomVOut zoomHIn zoomHOut zoomFit | zoomCross zoomH | cascade | closeOne closeAll | first rew left PAGE right ffw last".split(" ");
const TASKS1: [string, string, string?][] = [["ie", "Documentaci..."], ["folder", "U0215432 - ..."], ["sql", "Microsoft SQ..."], ["paint", "Paint", "3"], ["remote", "usu03 - Escri..."], ["notepad", "Bloc de n...", "3"]];
const TASKS2: [string, string, string?][] = [["outlook", "Bandeja de e..."], ["appBus", "GoalBus - [(2..."], ["notes", "C:\\Carpeta d..."], ["messenger", "jmaguado - ..."], ["word", "Microsoft...", "2"], ["skype", "Skype™ - go..."]];

@customElement("app-root")
class AppRoot extends LitElement {
  static styles = css`
    :host { display: block; width: 1280px; height: 1024px; overflow: hidden; background: #535353; font-family: "Open Sans", "Noto Sans", sans-serif; }
    .ico { display: block; flex: none; }
    .titlebar { height: 25px; box-sizing: border-box; display: grid; grid-template-columns: 31px 1fr 80px; align-items: center; padding: 1px 5px 0 2px; color: #f4f4f4; font-size: 12.5px; background: linear-gradient(#3f4351 0 5.500px, #2d2d2d 6px, #3c3c3c 22px, #454545 23px, #4a4a4a); border-bottom: 1px solid #484848; }
    .titlebar .cap { text-align: center; white-space: pre; letter-spacing: .1px; }
    .cap b { font-weight: normal; color: #8fb8ee; }
    .wins { display: flex; justify-content: flex-end; gap: 13px; color: #b4bfca; }
    .menu { height: 24px; display: flex; align-items: center; color: #fff; font-size: 11px; padding: 0 4px 0 4px; box-sizing: border-box; }
    .menu span { margin-right: 15px; }
    .menu .ico { margin: 0 9px 0 4px; }
    .menu .wins { margin-left: auto; gap: 6px; color: #8f99a6; }
    .grip { width: 2px; height: 14px; background: repeating-linear-gradient(#e4e4e4 0 2px, transparent 2px 4px); flex: none; }
    .bar { width: max-content; box-sizing: border-box; height: 25px; display: flex; align-items: center; background: linear-gradient(#cfd3da, #b9bdc4 55%, #9ba1aa); border-radius: 3px 4px 3px 0; padding-left: 5px; }
    .b1 { padding-right: 3px; margin-bottom: 1px; }
    .b2 { padding-right: 2px; margin-bottom: 1px; height: 24px; }
    .bar .grip { background: repeating-linear-gradient(#444 0 2px, transparent 2px 4px); margin-right: 2.500px; }
    .tb { width: 22px; height: 21px; display: grid; place-items: center; box-sizing: border-box; flex: none; }
    .on { background: linear-gradient(#ffe0a0, #ffc060 45%, #ffdf98); border: 1px solid #ffd890; width: 21px; margin-right: 1px; }
    .sep { width: 1px; height: 14px; margin: 0 3px 0 3px; background: #6c7179; border-right: 1px solid #f0f2f4; flex: none; }
    .dif { font: 8px "DejaVu Sans", sans-serif; letter-spacing: -.2px; }
    .combo { width: 123px; height: 18px; margin: 0 1px 0 2px; background: #fff; display: flex; align-items: center; justify-content: space-between; font-size: 11.2px; padding-left: 2px; box-sizing: border-box; border: 1px solid #fff; }
    .combo i { width: 13px; height: 16px; background: #b0b5bd; display: grid; place-items: center; }
    .page { width: 66px; height: 15px; margin: 0 2px 0 4px; background: #fff; text-align: center; font-size: 11px; line-height: 15px; }
    .gantt { margin-bottom: 5px; }
    .panels { display: grid; grid-template-columns: 601px 675px; gap: 4px; position: relative; }
    .callout { position: absolute; left: 888px; top: 20px; width: 117px; height: 23px; box-sizing: border-box; border: 3px solid #f00; }
    .status { height: 18px; box-sizing: border-box; background: linear-gradient(#40444f 0 8px, #2d2d2d 8.500px, #303030); color: #fff; display: flex; justify-content: flex-end; font: 11px/20px "Noto Sans", sans-serif; }
    .status div { border-left: 1px solid #85878b; box-sizing: border-box; margin-top: 3px; height: 14px; line-height: 16px; padding-left: 3px; }
    .s1 { width: 173px; }
    .s2 { width: 126px; }
    .s3 { width: 65px; }
    .s4 { width: 95px; letter-spacing: -.1px; }
    .task { height: 61px; display: flex; background: linear-gradient(#4a86ee, #2a62e0 5%, #2258d8 12%, #245edc 48%, #1f53cc 52%, #245edc 60%, #245ddb); color: #fff; font: 11px "Noto Sans", sans-serif; }
    .start { width: 102px; height: 31px; box-sizing: border-box; border-radius: 0 12px 12px 0; background: linear-gradient(#6cb86c, #3c963c 15%, #389438 60%, #2c7c2c 88%, #1c5c1c); display: flex; align-items: center; gap: 5px; padding: 0 0 1px 8px; font: italic bold 17px "Liberation Sans", sans-serif; text-shadow: 1px 1px 1px #1c4c1c; box-shadow: 1px 0 3px #123f9c; }
    .quick { display: grid; grid-template-columns: repeat(4, 23.600px); grid-template-rows: 30px 30px; padding: 1px 0 0 8px; width: 102px; justify-items: center; align-items: center; box-sizing: border-box; }
    .tasks { display: grid; grid-template-columns: repeat(6, 117px); gap: 7px 2.100px; grid-auto-rows: 23px; align-content: start; padding-top: 5px; margin-left: 11px; }
    .t { display: flex; align-items: center; gap: 4px; padding: 0 4px 0 9px; border-radius: 3px; background: linear-gradient(#6198f8, #3c7cf4 15%, #3a7af0 85%, #2f68d8); white-space: nowrap; box-sizing: border-box; letter-spacing: -.3px; }
    .t b { color: #ffc46c; }
    .t .arr { margin-left: auto; }
    .press { background: linear-gradient(#163a90, #1c4aae 20%, #1e4eb6); padding-left: 10px; }
    .wmp { width: 171px; height: 23px; margin: 4px 0 0 9px; }
    .es { width: 18px; margin: 0 9px 0 8px; text-align: center; font-size: 10px; padding-top: 24px; }
    .tray { flex: 1; position: relative; background: linear-gradient(#36b4f8, #1290ec 8%, #108ce8 90%, #0c74cc); display: grid; grid-template-columns: 18px 18px 18px 1fr; grid-template-rows: 19px 19px 19px; padding: 2px 8px 0 9px; align-items: center; justify-items: center; box-shadow: -1px 0 #0c4cb0; letter-spacing: -.2px; }
    .knob { position: absolute; left: -9px; top: 22px; }
    .date { grid-column: 4; }
  `;
  private item(n: string) {
    if (n === "|") return html`<div class="sep"></div>`;
    if (n === "DIF") return html`<div class="tb dif">DIF.</div>`;
    if (n === "COMBO") return html`<div class="combo"><span>Coste F.Obj</span><i><svg width="5" height="3"><path d="M0 0h5L2.500 3z" fill="#555"/></svg></i></div>`;
    if (n === "PAGE") return html`<div class="page">1/1</div>`;
    const on = n[0] === "*";
    return html`<div class=${classMap({ tb: true, on })}>${icon(on ? n.slice(1) : n, 17)}</div>`;
  }
  private wins(s: number) {
    return html`<div class="wins">
      <svg width=${s} height=${s}><path d="M1 8.500h7" stroke="currentColor" stroke-width="2"/></svg>
      <svg width=${s} height=${s}><path d="M2.500 3V1.500h6v4.500H7M.5 3.500h6v4.500h-6z" fill="none" stroke="currentColor"/></svg>
      <svg width=${s} height=${s}><path d="M1.500 1L8 8.500M8 1L1.500 8.500" stroke="currentColor" stroke-width="2.200"/></svg></div>`;
  }
  private task([i, t, n]: [string, string, string?]) {
    return html`<div class=${classMap({ t: true, press: i === "appBus" })}>${icon(i, 15)}${n ? html`<b>${n}</b>` : nothing}<span>${t}</span>${n ? html`<svg class="arr" width="5" height="3"><path d="M0 0h5L2.500 3z" fill="#fff"/></svg>` : nothing}</div>`;
  }
  private player() {
    const disc = (x: number, r: number) => svg`<circle cx=${x} cy="12" r=${r} fill="url(#disc)" stroke="#5c6878" stroke-width="1.200"/>`;
    return html`<svg class="wmp" width="171" height="23" viewBox="0 0 171 23">
      <defs><linearGradient id="wm" x1="0" y1="0" x2="0" y2="1"><stop offset="0" stop-color="#f4f6fa"/><stop offset=".5" stop-color="#c8d0de"/><stop offset="1" stop-color="#98a4ba"/></linearGradient>
      <linearGradient id="disc" x1="0" y1="0" x2="0" y2="1"><stop offset="0" stop-color="#fff"/><stop offset="1" stop-color="#b8c4d4"/></linearGradient></defs>
      <rect width="171" height="23" rx="2" fill="url(#wm)"/><path d="M0 0h18q8 10 14 23H0z" fill="#dde4ee"/>
      ${at(2, 4, 0.9, ICONS.flag)}
      <circle cx="30" cy="7" r="5" fill="#e8edf4" stroke="#7c889c"/><path d="M27.500 5.500L30 8L32.500 5.500" fill="none" stroke="#333" stroke-width="1.300"/>
      ${disc(49, 9.5)}${disc(70, 7.5)}${disc(91, 7.5)}${disc(110, 7.5)}
      <path d="M46.500 8v8M51 8v8" stroke="#203050" stroke-width="2"/><rect x="67.500" y="9.500" width="5" height="5" fill="#203050"/>
      <path d="M88 9v6M94 8.500v7L89 12z" stroke="#203050" stroke-width=".7" fill="#203050"/><path d="M113 9v6M107 8.500v7L112 12z" stroke="#203050" stroke-width=".7" fill="#203050"/>
      <rect x="123" y="4" width="26" height="15" rx="7" fill="url(#disc)" stroke="#5c6878"/><path d="M137 4v15" stroke="#5c6878"/><path d="M127 10h2l4-3v9l-4-3h-2zM134.500 9v5M140 10h6l-3 4z" fill="#203050" stroke="#203050" stroke-width=".4"/>
      <path d="M154.500 1v21M155 11.500h16" stroke="#8894a8"/><path d="M160.500 5L163 2.500L165.500 5M160.500 7.500L163 10L165.500 7.500" fill="none" stroke="#333"/><path d="M161.500 15v-1.500h5v4H165M159.500 15.500h5v4h-5z" fill="none" stroke="#333"/>
    </svg>`;
  }
  render() {
    return html`
      <div class="titlebar">${icon("appBus", 15)}<div class="cap"><b>GoalBus</b> - [(2129) - 20120506_ Domingo]</div>${this.wins(10)}</div>
      <div class="menu"><div class="grip"></div>${icon("docBus", 16)}${["Archivo", "Editar", "Ver", "Solución", "Ventana", "Ayuda"].map((m) => html`<span>${m}</span>`)}${this.wins(9)}</div>
      <div class="bar b1"><div class="grip"></div>${BAR1.map((n) => this.item(n))}</div>
      <div class="bar b2"><div class="grip"></div>${BAR2.map((n) => this.item(n))}</div>
      <bus-gantt class="gantt"></bus-gantt>
      <div class="panels">
        <bus-panel active heading="Autobuses" caption="47 Autobuses (58 steps)"
          .stats=${[["595:29:30", "Expediciones", "632:34:45", "Total", "41", "Camb. línea"], ["29:17:00", "En cabecera", "", "", "16305.6", "Kms"], ["7:48:15", "En depósito", "", "", "1409.1", "Kms Vacio"]]}
          .cost=${{ left: ["Expedición:|0", "En Vacío:|312", "Paradas:|185"], mid: ["Camb.línea:|205", "Plus:|9400000", "Desv:|102"], total: "4096382404" }}>
          <data-list .cols=${L_COLS} .rows=${L_ROWS} selected="9" thumb="61" hscroll></data-list>
        </bus-panel>
        <bus-panel heading="Autobús" caption="Autobús 11 (Tipo: ART)"
          .stats=${[["16:12:00", "Expediciones", "1", "Camb. línea", "Inicio:", "5:39:30"], ["0:58:00", "En cabecera", "421.8", "Kms", "Fin:", "22:49:30"], ["0:00:00", "En depósito", "50.1", "Kms Vacio", "Total", "17:10:00"]]}
          .cost=${{ left: ["Expedición:|0", "En Vacío:|8", "Paradas:|4"], mid: ["Camb.línea:|5", "Plus:|200000", "Desv:|2"], total: "145451055" }}>
          <data-list .cols=${R_COLS} .rows=${R_ROWS} shaded="0" thumb="80"></data-list>
        </bus-panel>
        <div class="callout"></div>
      </div>
      <div class="status"><div class="s1"></div><div class="s2"></div><div class="s3"></div><div class="s4">Soluciones 1</div></div>
      <div class="task">
        <div class="start">${icon("flag", 21)}<span>Inicio</span></div>
        <div class="quick">${["folder", "remote", "chrome", "ie", "outlook", "desktop", "media"].map((n) => icon(n, 16))}</div>
        <div class="tasks">${[...TASKS1, ...TASKS2].map((t) => this.task(t))}</div>
        ${this.player()}
        <div class="es">ES</div>
        <div class="tray">
          <svg class="knob" width="18" height="18"><circle cx="9" cy="9" r="8" fill="#2c8cf0" stroke="#9cd0fc"/><path d="M11 5L7 9l4 4" fill="none" stroke="#fff" stroke-width="2"/></svg>
          ${icon("shield", 15)}${icon("outlook", 16)}${icon("red", 15)}<span class="date">16:32</span>
          ${icon("pdf", 15)}${icon("find", 15)}${icon("net", 15)}<span class="date">jueves</span>
          ${icon("green", 15)}${icon("medic", 15)}<span class="date">27/09/2012</span>
        </div>
      </div>`;
  }
}
